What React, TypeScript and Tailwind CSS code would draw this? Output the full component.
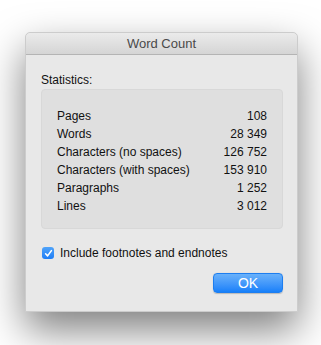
import React from "react";

const rows: [string, string][] = [
  ["Pages", "108"],
  ["Words", "28\u00a0349"],
  ["Characters (no spaces)", "126\u00a0752"],
  ["Characters (with spaces)", "153\u00a0910"],
  ["Paragraphs", "1\u00a0252"],
  ["Lines", "3\u00a0012"],
];

export default function App() {
  return (
    <div
      className="min-h-screen w-full bg-white pl-[25px] pr-[23px] pt-[32px]"
      style={{ fontFamily: '"Liberation Sans", Arial, sans-serif' }}
    >
      <div className="w-[273px] h-[280px] flex flex-col bg-[#e8e8e8] rounded-t-[5px] border border-[#cccccc] shadow-[0_18px_40px_rgba(0,0,0,0.5)]">
        <div className="h-[22px] shrink-0 flex items-center justify-center rounded-t-[5px] bg-gradient-to-b from-[#ebebeb] to-[#d5d5d5] border-b border-[#b4b4b4] text-[13px] text-[#4a4a4a]">
          Word Count
        </div>
        <div className="flex flex-col pl-[15px] pr-[14px] pt-[18px]">
          <div className="text-[12px] leading-[15px] text-[#111]">Statistics:</div>
          <div className="mt-[1px] rounded-[4px] bg-[#dfdfdf] border border-[#d8d8d8] pl-[15px] pr-[15px] pt-[17px] pb-[13px]">
            {rows.map(([label, value]) => (
              <div key={label} className="flex justify-between h-[18px] items-center text-[12px] text-[#111]">
                <span>{label}</span>
                <span>{value}</span>
              </div>
            ))}
          </div>
          <div className="mt-[16px] flex items-center h-[16px]">
            <div className="ml-[1px] w-[12px] h-[12px] rounded-[3px] bg-gradient-to-b from-[#4fa3f9] to-[#1c7df6] flex items-center justify-center">
              <svg width="9" height="9" viewBox="0 0 9 9">
                <path d="M1.6 4.8 L3.6 6.9 L7.4 1.6" fill="none" stroke="white" strokeWidth="1.6" strokeLinecap="round" strokeLinejoin="round" />
              </svg>
            </div>
            <span className="ml-[6px] text-[12px] text-[#111]">Include footnotes and endnotes</span>
          </div>
          <div className="mt-[12px] flex justify-end">
            <button className="w-[70px] h-[20px] rounded-[4px] bg-gradient-to-b from-[#69b1fa] to-[#1580fa] border border-[#1d7ef0] text-white text-[14px] flex items-center justify-center shadow-[0_0.5px_1px_rgba(0,0,0,0.2)]">
              OK
            </button>
          </div>
        </div>
      </div>
    </div>
  );
}
